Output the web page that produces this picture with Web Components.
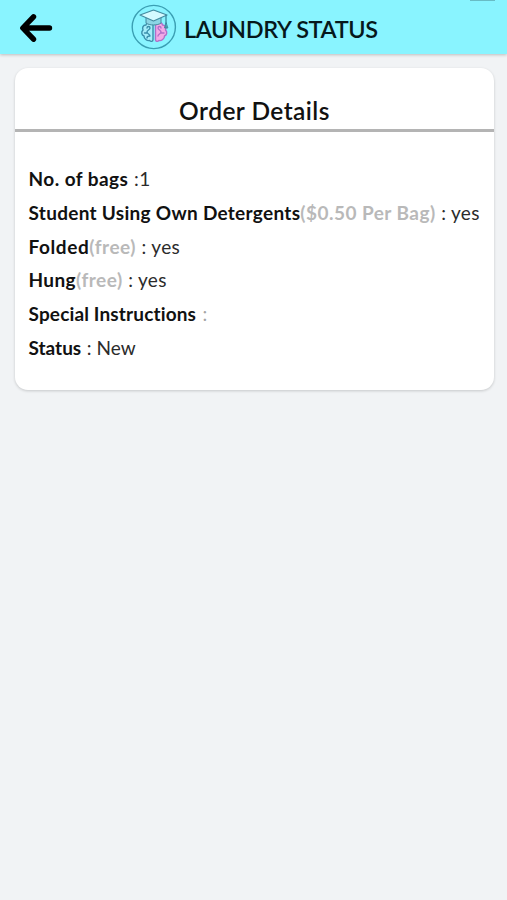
<!DOCTYPE html>
<html lang="en">
<head>
<meta charset="utf-8">
<meta name="viewport" content="width=device-width, initial-scale=1">
<title>Laundry Status</title>
<style>
    body {
        margin: 0;
        min-height: 100vh;
        background: #f1f3f5;
        color: #111;
        font-family: Lato, "Open Sans", sans-serif;
        font-variant-ligatures: none;
    }
</style>
</head>
<body>
<app-header>LAUNDRY STATUS</app-header>
<order-card>
    <span slot="title">Order Details</span>
    <order-row label="No. of bags" style="--label-spacing: 0.45px; --value-spacing: 0.5px">:1</order-row>
    <order-row label="Student Using Own Detergents" note="($0.50 Per Bag)" style="--label-spacing: 0.29px; --note-spacing: 0.46px">: yes</order-row>
    <order-row label="Folded" note="(free)" style="--label-spacing: 0.6px">: yes</order-row>
    <order-row label="Hung" note="(free)" style="--label-spacing: 0.4px">: yes</order-row>
    <order-row label="Special Instructions" style="--label-spacing: 0.15px" muted>:</order-row>
    <order-row label="Status" style="--value-spacing: 0.05px">: New</order-row>
</order-card>

<script>
// Top bar with back arrow and logo
class AppHeader extends HTMLElement {
    constructor() {
        super();
        this.attachShadow({ mode: 'open' });
    }

    connectedCallback() {
        this.shadowRoot.innerHTML = `
            <style>
                :host {
                    display: grid;
                    grid-template-columns: 131px 53px 1fr;
                    align-items: center;
                    position: relative;
                    height: 54px;
                    background: #89f4ff;
                    box-shadow: 0 1px 3px rgba(0, 0, 0, 0.22);
                }

                .back {
                    display: block;
                    width: 34px;
                    height: 30px;
                    margin-left: 19px;
                    margin-top: 2px;
                }

                .logo {
                    display: block;
                    width: 46px;
                    height: 46px;
                }

                h1 {
                    margin: 3px 0 0;
                    font-size: 23.5px;
                    line-height: 28px;
                    font-weight: 600;
                    letter-spacing: -0.38px;
                    white-space: nowrap;
                    color: #06181b;
                }

                .handle {
                    position: absolute;
                    top: 0;
                    right: 12px;
                    width: 25px;
                    height: 1px;
                    background: #68bcc5;
                }
            </style>

            <svg class="back" viewBox="0 0 34 30" fill="none" stroke="#000" stroke-width="5.4" stroke-linecap="round" stroke-linejoin="round">
                <path d="M14.5 3.8 3.8 15l10.7 11.2M5 15h25.5"/>
            </svg>
            <svg class="logo" viewBox="0 0 46 46" fill="none" stroke-linecap="round" stroke-linejoin="round">
                <circle cx="22.8" cy="23" r="21.6" stroke="#3b9fb3" stroke-width="1.4"/>
                <g stroke="#3a8fab" stroke-width="1.4" fill="#a5eefa">
                    <path d="M22 19c-3-1.500-7-.5-7 2-3 0-4 2.500-3 5-2 2-1.500 5 1 6 0 3 3 5 5.500 4.500 1.500 1.500 3.500 1 3.500-1z"/>
                    <path d="M16 24c0-2 3-2 3 0s-3 2-3 4 3 2 3 4M13.500 29h3M16 34c0-2 1.500-2 3-2" fill="none"/>
                </g>
                <g stroke="#b06fc9" stroke-width="1.4" fill="#f3a9e6">
                    <path d="M24.500 19c3-1.500 7-.5 7 2 3 0 4 2.500 3 5 2 2 1.500 5-1 6 0 3-3 5-5.500 4.500-1.500 1.500-3.500 1-3.500-1z"/>
                    <path d="M30 24c0-2-3-2-3 0s3 2 3 4-3 2-3 4M30 29h3" fill="none"/>
                </g>
                <path d="M15 13v6c3 2.600 12 2.600 15 0v-6" fill="#8bd5e5" stroke="#438ba0"/>
                <path d="m9 11 13.500-5L36 11l-13.500 6z" fill="#d5faff" stroke="#438ba0" stroke-width="1.2"/>
                <path d="M35 11.500v8" stroke="#317f97" stroke-width="1.2"/>
                <path d="m35 19-1.500 5h3z" fill="#4c9eae" stroke="#317f97" stroke-width=".8"/>
            </svg>
            <h1><slot></slot></h1>
            <div class="handle"></div>
        `;
    }
}

// White card: title, divider, list of rows
class OrderCard extends HTMLElement {
    constructor() {
        super();
        this.attachShadow({ mode: 'open' });
    }

    connectedCallback() {
        this.shadowRoot.innerHTML = `
            <style>
                :host {
                    display: block;
                    box-sizing: border-box;
                    height: 322px;
                    margin: 13.5px 13px 0 15px;
                    background: #fff;
                    border-radius: 13px;
                    box-shadow: 0 1px 3px rgba(0, 0, 0, 0.18);
                }

                h2 {
                    margin: 0;
                    padding: 28px 0 4px;
                    border-bottom: 3px solid #b4b4b4;
                    font-size: 24.5px;
                    line-height: 29px;
                    font-weight: 600;
                    letter-spacing: 0.45px;
                    text-align: center;
                }

                .rows {
                    padding: 30.6px 0 0 13.5px;
                }
            </style>

            <h2><slot name="title"></slot></h2>
            <div class="rows"><slot></slot></div>
        `;
    }
}

// One "label (note) : value" line
class OrderRow extends HTMLElement {
    constructor() {
        super();
        this.attachShadow({ mode: 'open' });
    }

    connectedCallback() {
        const label = this.getAttribute('label');
        const note = this.getAttribute('note') || '';

        this.shadowRoot.innerHTML = `
            <style>
                :host {
                    display: flex;
                    align-items: baseline;
                    height: 33.75px;
                    font-size: 19px;
                    line-height: 33.75px;
                    white-space: nowrap;
                }

                .label {
                    font-weight: 700;
                    letter-spacing: var(--label-spacing, 0);
                }

                .note {
                    font-weight: 700;
                    color: #b9b9b9;
                    letter-spacing: var(--note-spacing, 0.5px);
                }

                .value {
                    margin-left: 5.5px;
                    color: #2b2b2b;
                    letter-spacing: var(--value-spacing, 0.35px);
                }

                :host([muted]) .value {
                    margin-left: 6.5px;
                    color: #a5a5a5;
                }
            </style>

            <span class="label">${label}</span>
            <span class="note">${note}</span>
            <span class="value"><slot></slot></span>
        `;
    }
}

customElements.define('app-header', AppHeader);
customElements.define('order-card', OrderCard);
customElements.define('order-row', OrderRow);
</script>
</body>
</html>
